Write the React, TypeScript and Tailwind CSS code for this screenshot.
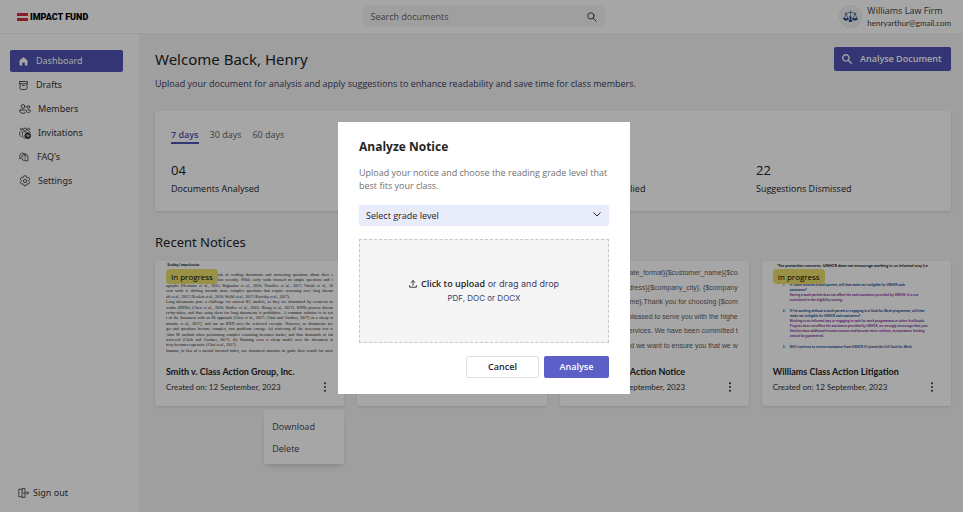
import type { ReactNode } from 'react';

const stroke = { fill: 'none', stroke: 'currentColor', strokeLinecap: 'round', strokeLinejoin: 'round' } as const;

function HomeIcon() {
  return (
    <svg viewBox="0 0 18 18" className="h-[9px] w-[9px]" fill="currentColor" aria-hidden="true">
      <path d="M8 .9a1.6 1.6 0 0 1 2 0l6.300 5.500c.5.400.700 1 .7 1.600V15.500c0 .9-.7 1.600-1.600 1.600h-2.600c-.7 0-1.200-.5-1.200-1.200V12c0-.6-.5-1-1-1H7.400c-.6 0-1 .4-1 1v3.900c0 .7-.5 1.200-1.200 1.200H2.600C1.700 17.100 1 16.400 1 15.500V8c0-.6.200-1.200.7-1.600z" />
    </svg>
  );
}

function ArchiveIcon() {
  return (
    <svg viewBox="0 0 18 18" className="h-[9px] w-[9px]" {...stroke} strokeWidth="1.700" aria-hidden="true">
      <rect x="1" y="1" width="16" height="4.500" rx="1" />
      <path d="M2 5.500V14a3 3 0 0 0 3 3h8a3 3 0 0 0 3-3V5.500M7 9h4" />
    </svg>
  );
}

function PeopleIcon() {
  return (
    <svg viewBox="0 0 24 20" className="h-[10px] w-3" {...stroke} strokeWidth="1.700" aria-hidden="true">
      <circle cx="8" cy="5" r="3.800" />
      <circle cx="18.500" cy="6" r="2.800" />
      <path d="M3 12h10c1 0 1.800.8 1.800 1.800 0 3-2.800 4.700-6.800 4.700s-6.800-1.700-6.800-4.700C1.200 12.800 2 12 3 12zM17.500 12h3.800c.9 0 1.600.7 1.600 1.600 0 2.500-2.300 3.900-5.500 3.400" />
    </svg>
  );
}

function InviteIcon() {
  return (
    <svg viewBox="0 0 24 24" className="h-3 w-3" {...stroke} strokeWidth="1.500" aria-hidden="true">
      <circle cx="12" cy="5" r="3" />
      <circle cx="5" cy="4.500" r="2.200" />
      <circle cx="19" cy="4.500" r="2.200" />
      <path d="M4.500 9.500H3c-1 0-1.700.7-1.700 1.700V15c0 2.200 1.300 3.900 3.200 4.600M19.500 9.500H21c1 0 1.700.7 1.700 1.500M12 22c-3 0-5-2-5-5v-5.500c0-1.100.7-1.800 1.800-1.800h6.400c1 0 1.600.5 1.800 1.300" />
      <circle cx="17.500" cy="17.500" r="5.800" fill="currentColor" />
      <path d="M15 17.500h5M18 15.300l2.200 2.200-2.200 2.200" className="stroke-white" />
    </svg>
  );
}

function FaqIcon() {
  return (
    <svg viewBox="0 0 20 20" className="h-[10px] w-[10px]" {...stroke} strokeWidth="1.500" aria-hidden="true">
      <path d="M4.300 11.500 1.500 14V7.500a5.500 5.500 0 0 1 9-4.200" />
      <path d="M12 4a6 6 0 0 1 6 6v7.500h-6A6.700 6.700 0 1 1 12 4z" />
      <path d="M10 9a2 2 0 1 1 3 1.700c-.7.400-1 .8-1 1.600M12 14.600v.1" />
    </svg>
  );
}

function GearIcon() {
  return (
    <svg viewBox="0 0 24 24" className="h-3 w-3" {...stroke} strokeWidth="1.600" aria-hidden="true">
      <circle cx="12" cy="12" r="3.200" />
      <path d="M9.700 1.800c1.500-.4 3.100-.4 4.600 0l.5 2.600c.2.800 1 1.300 1.900 1l2.500-.9c1 1.200 1.800 2.500 2.300 4l-2 1.800c-.7.700-.7 1.700 0 2.300l2 1.800c-.5 1.500-1.300 2.900-2.300 4l-2.500-.8c-.8-.3-1.700.2-1.900 1l-.5 2.700c-1.500.3-3.100.3-4.600 0l-.5-2.700c-.2-.8-1-1.300-1.900-1l-2.500.8c-1-1.100-1.800-2.500-2.300-4l2-1.800c.7-.6.700-1.600 0-2.300l-2-1.800c.5-1.500 1.300-2.800 2.300-4l2.500.9c.8.300 1.700-.2 1.900-1z" />
    </svg>
  );
}

function SignOutIcon() {
  return (
    <svg viewBox="0 0 22 20" className="h-[10px] w-[11px]" {...stroke} strokeWidth="1.500" aria-hidden="true">
      <path d="M8 3.500V1.200L14 1v18l-6-.2V3.500M8 2.500H1.500v15H8M10 10h11M18.300 7.300 21 10l-2.700 2.700" />
    </svg>
  );
}

function SearchIcon({ bold = false }: { bold?: boolean }) {
  return (
    <svg viewBox="0 0 20 20" className="h-[10px] w-[10px]" {...stroke} strokeWidth={bold ? 2.6 : 1.8} aria-hidden="true">
      <circle cx="7.800" cy="7.800" r="6.300" />
      <path d="m12.500 12.500 6 6" />
    </svg>
  );
}

function ScalesIcon() {
  return (
    <svg viewBox="0 0 30 26" className="h-[13px] w-[15px] text-[#1d4a80]" {...stroke} strokeWidth="1.300" aria-hidden="true">
      <path d="M15 2v17M4 6.500c4 1 7-2 11-2s7 3 11 2M6 7 2 17M6 7l4 10M24 7l-4 10M24 7l4 10" />
      <path d="M1 17h10c0 2-2 3.500-5 3.500S1 19 1 17zM19 17h10c0 2-2 3.500-5 3.500S19 19 19 17zM14 13h2v7h2v3h-6v-3h2z" fill="currentColor" />
    </svg>
  );
}

function UploadIcon() {
  return (
    <svg viewBox="0 0 18 18" className="h-2 w-2" {...stroke} strokeWidth="2" aria-hidden="true">
      <path d="M9 12V1.500M5 5.500l4-4 4 4M1.500 12.500v3.800h15v-3.800" />
    </svg>
  );
}

const navItems: { label: string; icon: ReactNode; box: string }[] = [
  { label: 'Dashboard', icon: <HomeIcon />, box: 'w-[9px]' },
  { label: 'Drafts', icon: <ArchiveIcon />, box: 'w-[9px]' },
  { label: 'Members', icon: <PeopleIcon />, box: 'w-[11px]' },
  { label: 'Invitations', icon: <InviteIcon />, box: 'w-[11px]' },
  { label: "FAQ's", icon: <FaqIcon />, box: 'w-[10px]' },
  { label: 'Settings', icon: <GearIcon />, box: 'w-[11px]' },
];

const stats = [
  { value: '04', label: 'Documents Analysed' },
  { value: '36', label: 'Suggestions Made' },
  { value: '14', label: 'Suggestions Applied' },
  { value: '22', label: 'Suggestions Dismissed' },
];

const paperLines = [
  { text: 'consider the a well known task of reading documents and answering questions about their c' },
  { text: 'comprehension has seen attention recently. While early work focused on simple questions and s' },
  { text: 'agraphs (Hermann et al., 2015; Rajpurkar et al., 2016; Trischler et al., 2017; Onishi et al., 20' },
  { text: 'cent work is shifting towards more complex questions that require reasoning over long docum' },
  { text: 'shi et al., 2017; Hewlett et al., 2016; Welbl et al., 2017; Kocisky et al., 2017).', last: true },
  { text: 'Long documents pose a challenge for current RC models, as they are dominated by recurrent ne' },
  { text: 'works (RNNs) (Chen et al., 2016; Kadlec et al., 2016; Xiong et al., 2017). RNNs process docum' },
  { text: 'en-by-token, and thus using them for long documents is prohibitive. A common solution is to retr' },
  { text: 't of the document with an IR approach (Chen et al., 2017; Clark and Gardner, 2017) or a cheap m' },
  { text: 'atanabe et al., 2017), and run an RNN over the retrieved excerpts. However, as documents bec' },
  { text: 'ger and questions become complex, two problems emerge: (a) retrieving all the necessary text w' },
  { text: '-shot IR method when performing complex reasoning becomes harder, and thus thousands of tok' },
  { text: 'retrieved (Clark and Gardner, 2017). (b) Running even a cheap model over the document in' },
  { text: 'irety becomes expensive (Choi et al., 2017).', last: true },
  { text: 'humans, in lieu of a mental inverted index, use document structure to guide their search for answ' },
];

const letterLines = [
  '{$name},{$date_format}{$customer_name}{$co',
  '{$company_address}{$company_city}, {$company',
  '{$customer_name},Thank you for choosing {$com',
  'We are pleased to serve you with the highe',
  'quality services. We have been committed t',
  'to you and we want to ensure you that we w',
];

const faqItems = [
  {
    question: ['If I have received a work permit, will that make me ineligible for UNHCR cash', 'assistance?'],
    answer: [
      'Having a work permit does not affect the cash assistance provided by UNHCR. It is not',
      'considered in the eligibility scoring.',
    ],
  },
  {
    question: [
      "If I'm working without a work permit or engaging in a Cash-for-Work programme, will that",
      'make me ineligible for UNHCR cash assistance?',
    ],
    answer: [
      'Working in an informal way or engaging in cash for work programmes or other livelihoods',
      'Projects does not affect the assistance provided by UNHCR, we strongly encourage that your',
      'families have additional income sources and become more resilient, as assistance funding',
      'cannot be guaranteed.',
    ],
  },
  {
    question: ['Will I continue to receive assistance from UNHCR if I joined the ILO Cash-for-Work'],
    answer: [],
  },
];

function PaperPreview() {
  return (
    <div className="flex h-full flex-col font-['Liberation_Serif',serif] text-[4px] leading-[5px] text-[#222]">
      <p className="pb-1 text-[3px] font-bold">&nbsp; Reading Comprehension</p>
      <div className="flex flex-1 flex-col justify-between">
        {paperLines.map(({ text, last }) => (
          <p key={text} className={last ? '' : '[text-align-last:justify]'}>
            {text}
          </p>
        ))}
      </div>
    </div>
  );
}

function LetterPreview() {
  return (
    <div className="flex h-full flex-col items-end justify-between pt-1 pb-[2px] font-['Liberation_Sans',sans-serif] text-[7px] leading-[11px] whitespace-nowrap text-[#5d5d5d]">
      {letterLines.map((line) => (
        <p key={line}>{line}</p>
      ))}
    </div>
  );
}

function FaqPreview() {
  return (
    <div className="h-full font-['Open_Sans',sans-serif] text-[3px] leading-[5px] font-bold whitespace-nowrap text-[#8a3aa0]">
      <p className="pl-1 font-['Lato',sans-serif] text-[4px] text-[#111]">*For protection concerns, UNHCR does not encourage working in an informal way (i.e</p>
      <ol className="flex flex-col gap-[6px] pt-[15px] pl-[10px]">
        {faqItems.map(({ question, answer }, index) => (
          <li key={question[0]} className="flex gap-1">
            <span className="w-[3px] text-[#1f4f8f]">{index + 1}-</span>
            <div>
              {question.map((line) => (
                <p key={line} className="text-[#1f4f8f]">{line}</p>
              ))}
              {answer.map((line) => (
                <p key={line}>{line}</p>
              ))}
            </div>
          </li>
        ))}
      </ol>
    </div>
  );
}

const notices = [
  { title: 'Smith v. Class Action Group, Inc.', progress: true, menu: true, preview: <PaperPreview /> },
  { title: 'Johnson Settlement Notice', progress: false, menu: false, preview: <PaperPreview /> },
  { title: 'Williams Class Action Notice', progress: false, menu: false, preview: <LetterPreview /> },
  { title: 'Williams Class Action Litigation', progress: true, menu: false, preview: <FaqPreview /> },
];

function Header() {
  return (
    <header className="grid h-[34px] shrink-0 grid-cols-[1fr_242px_1fr] items-center border-b border-[#f0f0f0] bg-white pr-3 pl-4">
      <a href="#" className="flex items-center gap-[2px]">
        <svg viewBox="0 0 12 8" className="h-2 w-3" fill="#d9283c" aria-hidden="true">
          <path d="M1 0h11v3H1zM1 5h11v3H1z" />
        </svg>
        <span className="font-['Roboto','Liberation_Sans',sans-serif] text-[9px] leading-3 font-black text-black">IMPACT FUND</span>
      </a>
      <form role="search" className="flex h-[21px] items-center rounded-sm bg-[#f5f5f5] pr-2 pl-2">
        <input type="search" aria-label="Search documents" placeholder="Search documents" className="min-w-0 flex-1 bg-transparent text-[9px] placeholder:text-[#616161] focus:outline-none" />
        <button type="button" aria-label="Search" className="text-[#333]">
          <SearchIcon />
        </button>
      </form>
      <div className="flex items-center gap-[6px] justify-self-end">
        <span className="flex size-[21px] items-center justify-center rounded-full bg-[#f5f5f5] ring-1 ring-[#ececec]">
          <ScalesIcon />
        </span>
        <div className="text-[#424242]">
          <p className="text-[9px] leading-3">Williams Law Firm</p>
          <p className="font-['Lato',sans-serif] text-[8px] leading-3">henryarthur@gmail.com</p>
        </div>
      </div>
    </header>
  );
}

function Sidebar() {
  return (
    <aside className="flex w-[139px] shrink-0 flex-col justify-between bg-white pt-4 pr-4 pb-[13px] pl-[10px] font-['Noto_Sans',sans-serif]">
      <nav className="flex flex-col gap-[2px]">
        {navItems.map((item, index) => (
          <a
            key={item.label}
            href="#"
            aria-current={index === 0 ? 'page' : undefined}
            className="flex h-[22px] items-center gap-2 rounded-xs pl-[9px] text-[9px] text-[#333] aria-[current=page]:bg-[#4f52b2] aria-[current=page]:text-white"
          >
            <span className={item.box}>{item.icon}</span>
            {item.label}
          </a>
        ))}
      </nav>
      <button type="button" className="flex items-center gap-1 pl-2 text-[9px] leading-3 text-[#333]">
        <SignOutIcon />
        Sign out
      </button>
    </aside>
  );
}

function NoticeCard({ title, progress, menu, preview }: (typeof notices)[number]) {
  return (
    <article className="relative rounded-xs bg-white px-[11px] pt-[2px] pb-3 shadow-sm">
      <div className="relative">
        <div className="h-[90px] overflow-hidden">{preview}</div>
        {progress && (
          <span className="absolute top-[6px] left-0 rounded-sm bg-[#ebe16c] px-[5px] text-[8px] leading-[15px] text-black">In progress</span>
        )}
      </div>
      <h3 className="mt-3 font-['Lato',sans-serif] text-[9px] leading-[13px] font-bold whitespace-nowrap text-[#242424]">{title}</h3>
      <div className="mt-[2px] flex items-center justify-between pr-1">
        <p className="font-['Lato',sans-serif] text-[8px] leading-[14px] text-[#333]">Created on: 12 September, 2023</p>
        <button type="button" aria-label={`Options for ${title}`} className="flex w-2 justify-center text-[#222]">
          <svg viewBox="0 0 4 12" className="h-[10px] w-1" fill="currentColor" aria-hidden="true">
            <circle cx="2" cy="1.500" r="1.100" />
            <circle cx="2" cy="6" r="1.100" />
            <circle cx="2" cy="10.500" r="1.100" />
          </svg>
        </button>
      </div>
      {menu && (
        <div className="absolute top-full right-0 mt-1 flex w-20 flex-col gap-[6px] rounded-xs bg-white px-2 pt-[9px] pb-[7px] text-[9px] leading-4 text-[#424242] shadow-md">
          <button type="button" className="text-left">Download</button>
          <button type="button" className="text-left">Delete</button>
        </div>
      )}
    </article>
  );
}

function Dashboard() {
  return (
    <main className="min-w-0 flex-1 bg-[#f5f5f5] pt-[13px] pr-3 pl-4 text-[#242424]">
      <div className="flex items-start justify-between">
        <div>
          <h1 className="font-['Noto_Sans',sans-serif] text-[15px] leading-6">Welcome Back, Henry</h1>
          <p className="mt-[6px] text-[9px] leading-[14px] text-[#3d3a5c]">Upload your document for analysis and apply suggestions to enhance readability and save time for class members.</p>
        </div>
        <button type="button" className="flex h-6 w-[117px] shrink-0 items-center gap-2 rounded-xs bg-[#4f52b2] pl-2 text-[9px] font-semibold whitespace-nowrap text-white">
          <SearchIcon bold />
          Analyse Document
        </button>
      </div>
      <section className="mt-5 h-[100px] rounded-xs bg-white pt-4 pl-4 shadow-sm">
        <div className="flex gap-[11px] text-[9px] leading-[15px] text-[#616161]">
          <button type="button" className="border-b-2 border-[#4f52b2] font-semibold text-[#4f52b2]">7 days</button>
          <button type="button" className="border-b-2 border-transparent">30 days</button>
          <button type="button" className="border-b-2 border-transparent">60 days</button>
        </div>
        <dl className="mt-4 grid grid-cols-4">
          {stats.map((stat) => (
            <div key={stat.label} className="flex flex-col-reverse">
              <dt className="text-[9px] leading-[18px]">{stat.label}</dt>
              <dd className="text-[13px] leading-5">{stat.value}</dd>
            </div>
          ))}
        </dl>
      </section>
      <h2 className="mt-[19px] font-['Noto_Sans',sans-serif] text-[13px] leading-6">Recent Notices</h2>
      <section className="mt-[7px] grid grid-cols-4 gap-[13px] pb-16">
        {notices.map((notice) => (
          <NoticeCard key={notice.title} {...notice} />
        ))}
      </section>
    </main>
  );
}

function AnalyzeDialog() {
  return (
    <div className="fixed inset-0 flex items-center justify-center bg-black/35 pt-1 pl-[5px]">
      <div role="dialog" aria-modal="true" aria-labelledby="analyze-title" className="w-[292px] bg-white px-[21px] py-4 text-[#242424]">
        <h2 id="analyze-title" className="text-[12px] leading-[18px] font-bold">Analyze Notice</h2>
        <p className="mt-[10px] text-[9px] leading-[13px] text-[#707070]">Upload your notice and choose the reading grade level that best fits your class.</p>
        <div className="relative mt-[13px]">
          <select aria-label="Grade level" className="block h-[21px] w-full appearance-none rounded-xs bg-[#e8ebfa] px-[7px] text-[9px]">
            <option>Select grade level</option>
          </select>
          <svg viewBox="0 0 16 10" className="pointer-events-none absolute top-[7px] right-2 h-[5px] w-2" {...stroke} strokeWidth="2" aria-hidden="true">
            <path d="m1.500 1.500 6.500 6.500 6.500-6.500" />
          </svg>
        </div>
        <label className="mt-[13px] flex h-[104px] flex-col items-center justify-center border border-dashed border-[#c7c7c7] bg-[#f5f5f5] text-[#424066]">
          <span className="flex items-center gap-1 text-[9px] leading-[15px]">
            <span className="text-[#242424]">
              <UploadIcon />
            </span>
            <span className="font-['Inter',sans-serif]">
              <b className="font-['Open_Sans',sans-serif] font-semibold text-[#242424]">Click to upload</b> or drag and drop
            </span>
          </span>
          <span className="font-['Inter',sans-serif] text-[8px] leading-[15px]">PDF, DOC or DOCX</span>
          <input type="file" accept=".pdf,.doc,.docx" className="sr-only" />
        </label>
        <div className="mt-[13px] flex justify-end gap-[5px] text-[9px] font-semibold">
          <button type="button" className="h-[22px] w-[73px] rounded-xs border border-[#e0e0e0]">Cancel</button>
          <button type="button" className="h-[22px] w-[65px] rounded-xs bg-[#5b5fc7] text-white">Analyse</button>
        </div>
      </div>
    </div>
  );
}

export default function App() {
  return (
    <div className="flex min-h-screen flex-col bg-[#f5f5f5] font-['Open_Sans',sans-serif]">
      <Header />
      <div className="flex flex-1">
        <Sidebar />
        <Dashboard />
      </div>
      <AnalyzeDialog />
    </div>
  );
}
